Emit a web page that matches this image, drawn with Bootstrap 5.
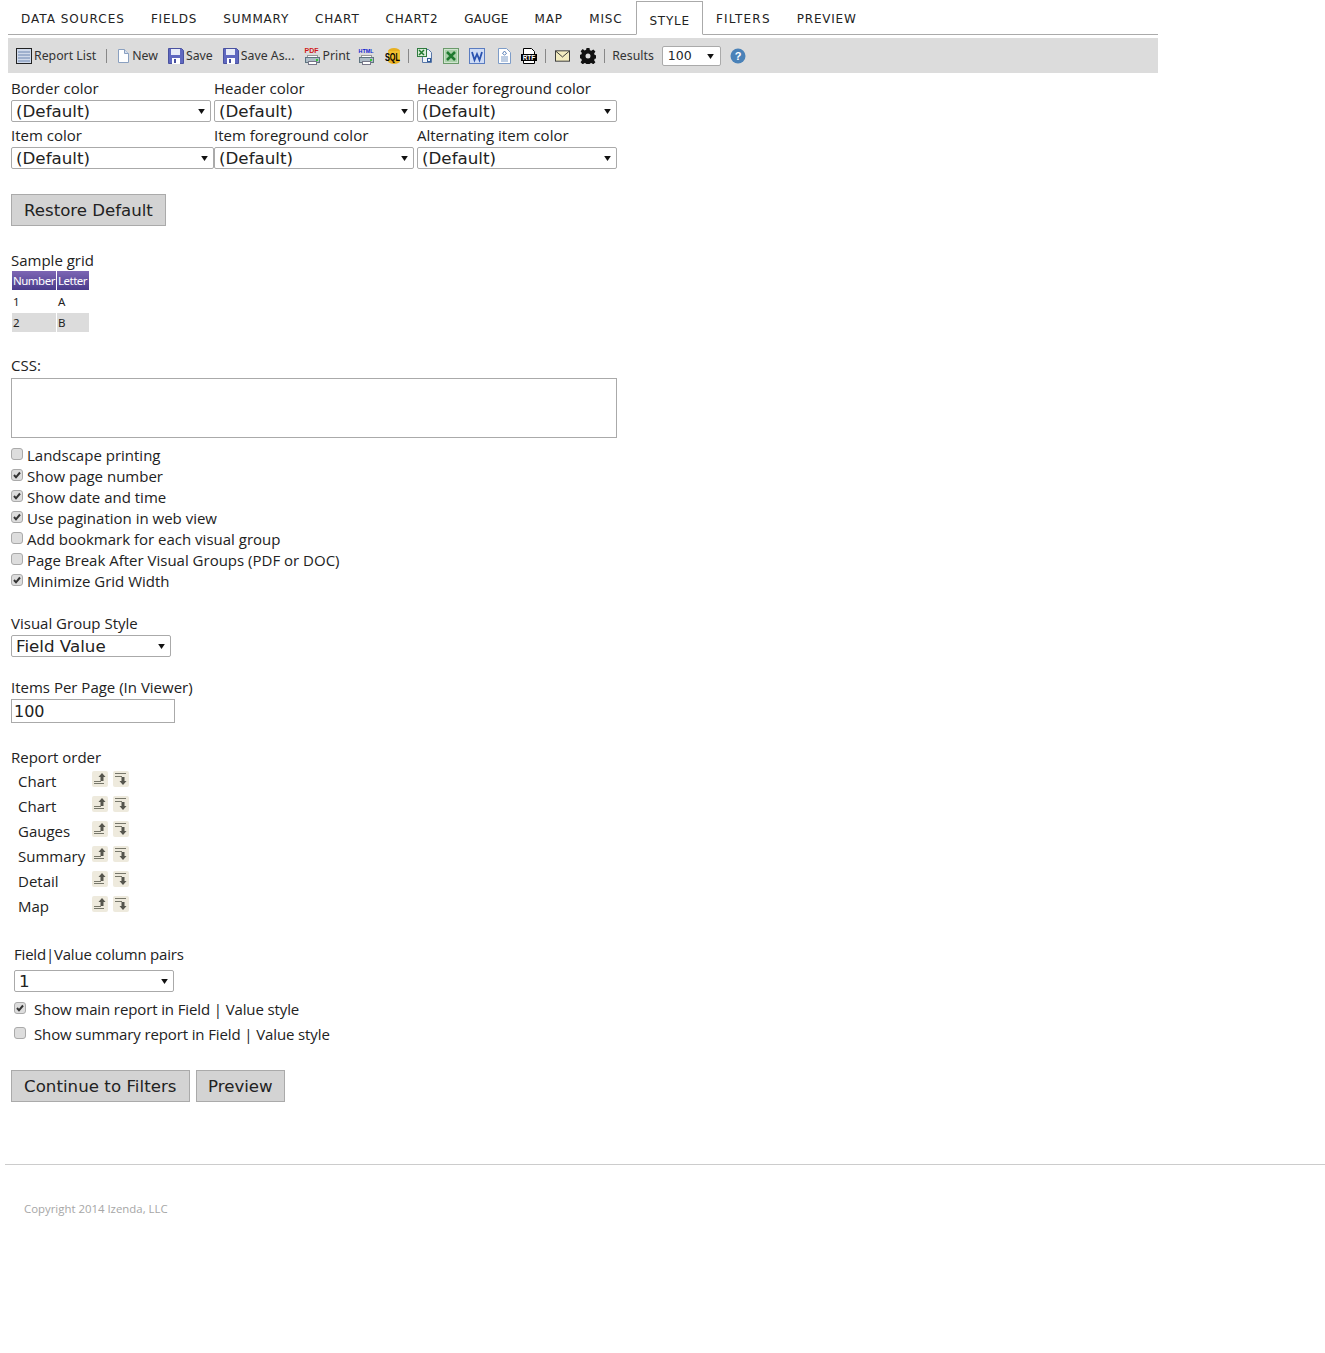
<!DOCTYPE html>
<html lang="en">
<head>
  <meta charset="UTF-8" />
  <meta name="viewport" content="width=device-width, initial-scale=1" />
  <title>Report Designer - Style</title>
  <link href="https://cdn.jsdelivr.net/npm/bootstrap@5.3.3/dist/css/bootstrap.min.css" rel="stylesheet" />
  <style>
    body {
      font-family: "Open Sans", "Noto Sans", sans-serif;
      font-size: 15px;
      color: #222;
      background: #fff;
      height: 1353px;
      overflow: hidden;
    }
    .top-area { width: 1150px; margin-left: 8px; }
    .tab-strip {
      height: 35px;
      border-bottom: 1px solid #aaa;
      flex-wrap: nowrap;
      padding-left: 0;
    }
    .tab-strip .nav-link {
      font-family: "DejaVu Sans", sans-serif;
      font-size: 12px;
      letter-spacing: .8px;
      color: #222;
      padding: 10px 13px 0;
      height: 34px;
      border: 0;
      margin: 0;
    }
    .tab-strip .nav-link.active {
      height: 34px;
      margin-top: 1px;
      padding: 10px 12px 0;
      border: 1px solid #aaa;
      border-bottom: 1px solid #fff;
      border-radius: 0;
    }
    /* word widths differ a bit from the original font */
    .tab-strip li:nth-child(1) .nav-link { letter-spacing: 1px; }
    .tab-strip li:nth-child(6) .nav-link { letter-spacing: .2px; }
    .tab-strip li:nth-child(7) .nav-link { padding-right: 13.6px; }
    .tab-strip li:nth-child(8) .nav-link { padding-right: 14px; }
    .tab-strip li:nth-child(10) .nav-link { letter-spacing: 1.2px; }
    .tool-bar {
      margin-top: 3px;
      height: 35px;
      background: #dcdcdc;
      padding: 1px 0 0 8px;
      font-family: "Noto Sans", sans-serif;
      font-size: 12.3px;
      color: #333;
    }
    .tool-item { margin-right: 10px; white-space: nowrap; }
    .tool-item svg { display: block; overflow: visible; }
    .icon-gap svg { margin-right: 2px; }
    .print-item { margin-right: 8px; }
    .word-item { margin-right: 13px; }
    .tool-sep { width: 1px; height: 14px; background: #888; }
    .sep-a { margin: 0 10px 0 0; }
    .sep-b { margin: 0 8px 0 -3px; }
    .sep-c { margin: 0 9px 0 -2px; }
    .sep-d { margin: 0 7px 0 -2px; }
    .results-sel {
      width: 59px;
      height: 20px;
      margin: 0 9px 0 8px;
      padding: 0 0 0 5px;
      font-family: "DejaVu Sans", sans-serif;
      font-size: 12.5px;
      border: 1px solid #aaa;
      border-radius: 2px;
      background-size: 7px 5px;
      background-position: right 6px center;
      background-image: url("data:image/svg+xml,%3csvg xmlns='http://www.w3.org/2000/svg' viewBox='0 0 8 6'%3e%3cpath fill='%23111' d='M0 0h8L4 6z'/%3e%3c/svg%3e");
    }
    .form-area { padding-left: 11px; width: 617px; }
    .lbl { line-height: 20px; height: 20px; }
    .first-row { padding-top: 6px; }
    .sel-cell { width: 200px; margin-right: 3px; }
    .sel-cell.wide { width: 203px; margin-right: 0; }
    .sel-cell .lbl { line-height: 18px; }
    .sel-cell .plain-sel { margin-top: 1px; }
    .plain-sel {
      height: 22px;
      padding: 0 0 0 4px;
      font-family: "DejaVu Sans", sans-serif;
      font-size: 16.7px;
      line-height: 20px;
      color: #222;
      border: 1px solid #aaa;
      border-radius: 2px;
      background-position: right 5px center;
      background-size: 7px 5px;
      background-image: url("data:image/svg+xml,%3csvg xmlns='http://www.w3.org/2000/svg' viewBox='0 0 8 6'%3e%3cpath fill='%23111' d='M0 0h8L4 6z'/%3e%3c/svg%3e");
    }
    .grey-btn {
      font-family: "DejaVu Sans", sans-serif;
      font-size: 16.6px;
      line-height: 21px;
      height: 32px;
      padding: 5px 12px 4px;
      color: #222;
      background: #d3d3d3;
      border: 1px solid #aaa;
      border-radius: 0;
    }
    .grey-btn.long-btn { letter-spacing: .05px; }
    .grey-btn.short-btn { padding-left: 11.5px; padding-right: 11.5px; }
    .sample-grid {
      table-layout: fixed;
      width: 79px;
      margin-top: -1px;
      border-collapse: separate;
      border-spacing: 1px 2px;
      font-family: "Noto Sans", sans-serif;
      font-size: 11.5px;
    }
    .sample-grid th {
      height: 19px;
      padding: 0 1px;
      font-weight: 400;
      color: #fff;
      letter-spacing: -.5px;
      white-space: nowrap;
      background: linear-gradient(#7d66b4, #4a3c8c);
    }
    .sample-grid td { height: 19px; padding: 0 1px; }
    .sample-grid tr.alt td { background: #dcdcdc; }
    .css-box {
      display: block;
      width: 606px;
      height: 60px;
      border: 1px solid #aaa;
      border-radius: 0;
      padding: 2px;
      resize: none;
    }
    .chk-line { height: 21px; line-height: 21px; display: flex; align-items: center; white-space: nowrap; }
    .chk-line .form-check-input {
      width: 12px;
      height: 12px;
      margin: -4px 4px 0 0;
      background-color: #ddd;
      border: 1px solid #aaa;
      border-radius: 3px;
      flex: none;
    }
    .chk-line .form-check-input:checked {
      background-size: 10px 10px;
      background-image: url("data:image/svg+xml,%3csvg xmlns='http://www.w3.org/2000/svg' viewBox='0 0 10 10'%3e%3cpath fill='none' stroke='%23333' stroke-width='2' d='M2 5l2 2.300L8 2.500'/%3e%3c/svg%3e");
    }
    .wide-gap .form-check-input { margin-right: 8px; }
    .wide-gap.chk-line { height: 25px; }
    .pipe-text { letter-spacing: -.12px; }
    .pipe-text .lbl { letter-spacing: -.2px; line-height: 22px; }
    .num-box {
      display: block;
      width: 164px;
      height: 24px;
      padding: 1px 2px 0;
      font-family: "DejaVu Sans", sans-serif;
      font-size: 16px;
      color: #222;
      border: 1px solid #aaa;
      border-radius: 0;
    }
    .order-row { height: 25px; padding-left: 7px; }
    .order-name { width: 74px; line-height: 25px; }
    .order-btn { display: block; margin: 2px 5px 0 0; }
    .foot-line { margin: 62px 0 0 5px; border: 0; border-top: 1px solid #ccc; opacity: 1; }
    .copy-note { padding: 35px 0 0 24px; font-size: 11.4px; color: #a6a6a6; }
  </style>
</head>
<body>

<svg width="0" height="0" class="position-absolute">
  <defs>
    <symbol id="ic-list" viewBox="0 0 16 16">
      <rect x=".5" y=".5" width="15" height="15" fill="#cfd9ea" stroke="#222"/>
      <path d="M2 4h12M2 7h12M2 10h12M2 13h12" stroke="#6d86b0"/>
    </symbol>
    <symbol id="ic-page" viewBox="0 0 13 16">
      <path d="M1.500 1.500h6l4 4v9h-10z" fill="#fff" stroke="#8aa0c0"/>
      <path d="M7.500 1.500v4h4" fill="#d5dfee" stroke="#8aa0c0"/>
    </symbol>
    <symbol id="ic-disk" viewBox="0 0 16 16">
      <path d="M.5.500h13l2 2v13H.500z" fill="#5f68c0" stroke="#4a52a0"/>
      <rect x="3" y="1" width="9" height="6" fill="#e8ecf8"/>
      <rect x="4" y="10" width="8" height="6" fill="#fff"/>
      <rect x="6" y="11" width="2" height="4" fill="#4a52a0"/>
    </symbol>
    <symbol id="ic-printer" viewBox="0 0 16 16">
      <rect x="3.500" y="6.500" width="10" height="3" fill="#fff" stroke="#999"/>
      <rect x="1.500" y="8.500" width="14" height="5" fill="#aebcc6" stroke="#5f7480"/>
      <rect x="4.500" y="12.500" width="8" height="3" fill="#fff" stroke="#778"/>
      <rect x="12" y="10" width="2" height="2" fill="#3c3"/>
    </symbol>
    <symbol id="ic-excel" viewBox="0 0 16 16">
      <rect x=".5" y=".5" width="15" height="15" fill="#cfe5cf" stroke="#6a9a6a"/>
      <rect x="2" y="2" width="12" height="12" fill="#a9cfa9"/>
      <path d="M4 4l8 8M12 4l-8 8" stroke="#1f7a2f" stroke-width="2.500"/>
    </symbol>
    <symbol id="ic-sheet" viewBox="0 0 16 16">
      <path d="M5.500 1.500h6l3 3v10h-9z" fill="#eef3fa" stroke="#5a78a8"/>
      <rect x=".5" y=".5" width="9" height="8" fill="#d6ecd6" stroke="#2f7a3f"/>
      <path d="M2 2l5 5M7 2L2 7" stroke="#1f7a2f" stroke-width="1.500"/>
      <rect x="10.500" y="10.500" width="3" height="3" fill="none" stroke="#2f5a98"/>
    </symbol>
    <symbol id="ic-word" viewBox="0 0 16 16">
      <rect x=".5" y=".5" width="15" height="15" fill="#cfdcf5" stroke="#5a7cc0"/>
      <path d="M3 4l2.500 8L8 6l2.500 6L13 4" fill="none" stroke="#2a52b0" stroke-width="1.800"/>
    </symbol>
    <symbol id="ic-doc" viewBox="0 0 13 16">
      <path d="M.5.500h8l4 4v11H.500z" fill="#fff" stroke="#7d9cc8"/>
      <path d="M3 9h7M3 11h7M3 13h7" stroke="#7d9cc8"/>
      <path d="M6.500 3l2 2.500-2 1.500-2-1.500z" fill="none" stroke="#5a80b8"/>
    </symbol>
    <symbol id="ic-rtf" viewBox="0 0 16 16">
      <path d="M2.500.500h8l3 3V7h-11z" fill="#fff" stroke="#000"/>
      <rect y="6" width="16" height="7" fill="#000"/>
      <path d="M2.500 13v2.500h11V13" fill="#fff" stroke="#000"/>
      <text x="8" y="12" text-anchor="middle" font-size="6.500" font-weight="700" font-family="Liberation Sans" fill="#fff">RTF</text>
    </symbol>
    <symbol id="ic-sql" viewBox="0 0 17 16">
      <ellipse cx="10" cy="3" rx="6" ry="3" fill="#e8b020"/>
      <rect x="4" y="3" width="12" height="10" fill="#f0c030"/>
      <ellipse cx="10" cy="13" rx="6" ry="3" fill="#e8b020"/>
      <text x="8.500" y="13" text-anchor="middle" font-size="10.500" font-weight="700" font-family="Liberation Sans" textLength="15" lengthAdjust="spacingAndGlyphs" fill="#000">SQL</text>
    </symbol>
    <symbol id="ic-mail" viewBox="0 0 16 16">
      <rect x=".5" y="2.500" width="15" height="11" fill="#f3ecc0" stroke="#333"/>
      <path d="M1 3l7 6 7-6" fill="none" stroke="#333"/>
    </symbol>
    <symbol id="ic-gear" viewBox="0 0 16 16">
      <path fill="#111" fill-rule="evenodd" d="M6.500 0h3l.4 2.200 1.500.6 1.900-1.300 2.100 2.100-1.300 1.900.6 1.500 2.200.4v3l-2.200.4-.6 1.500 1.300 1.900-2.100 2.100-1.900-1.300-1.500.6-.4 2.200h-3l-.4-2.200-1.500-.6-1.900 1.300-2.100-2.100 1.300-1.900-.6-1.500L-.9 10v-3l2.200-.4.6-1.500-1.300-1.900 2.100-2.100 1.900 1.300 1.500-.6zM8 5.500a2.500 2.500 0 1 0 0 5 2.500 2.500 0 0 0 0-5z"/>
    </symbol>
    <symbol id="ic-up" viewBox="0 0 16 16">
      <rect width="16" height="16" rx="2" fill="#eeeadd"/>
      <path d="M2 10.500h7M2 12.500h10" stroke="#77776a"/>
      <path d="M10 2l3.500 4h-2v4h-3V6h-2z" fill="#55554d"/>
    </symbol>
    <symbol id="ic-down" viewBox="0 0 16 16">
      <rect width="16" height="16" rx="2" fill="#eeeadd"/>
      <path d="M2 2.500h11M2 5.500h7" stroke="#77776a"/>
      <path d="M10 14l-3.500-4h2V6h3v4h2z" fill="#55554d"/>
    </symbol>
  </defs>
</svg>

<div class="top-area">
  <ul class="nav tab-strip">
    <li class="nav-item"><a class="nav-link" href="#">DATA SOURCES</a></li>
    <li class="nav-item"><a class="nav-link" href="#">FIELDS</a></li>
    <li class="nav-item"><a class="nav-link" href="#">SUMMARY</a></li>
    <li class="nav-item"><a class="nav-link" href="#">CHART</a></li>
    <li class="nav-item"><a class="nav-link" href="#">CHART2</a></li>
    <li class="nav-item"><a class="nav-link" href="#">GAUGE</a></li>
    <li class="nav-item"><a class="nav-link" href="#">MAP</a></li>
    <li class="nav-item"><a class="nav-link" href="#">MISC</a></li>
    <li class="nav-item"><a class="nav-link active" href="#">STYLE</a></li>
    <li class="nav-item"><a class="nav-link" href="#">FILTERS</a></li>
    <li class="nav-item"><a class="nav-link" href="#">PREVIEW</a></li>
  </ul>

  <div class="tool-bar d-flex align-items-center">
    <span class="tool-item icon-gap d-flex align-items-center"><svg width="16" height="16"><use href="#ic-list"/></svg>Report List</span>
    <span class="tool-sep sep-a"></span>
    <span class="tool-item icon-gap d-flex align-items-center"><svg width="13" height="16"><use href="#ic-page"/></svg>New</span>
    <span class="tool-item icon-gap d-flex align-items-center"><svg width="16" height="16"><use href="#ic-disk"/></svg>Save</span>
    <span class="tool-item icon-gap d-flex align-items-center"><svg width="16" height="16"><use href="#ic-disk"/></svg>Save As...</span>
    <span class="tool-item print-item icon-gap d-flex align-items-center">
      <svg width="16" height="18" viewBox="0 0 16 18"><text x="7.500" y="6" text-anchor="middle" font-size="7" font-weight="700" font-family="Liberation Sans" textLength="14" lengthAdjust="spacingAndGlyphs" fill="#d01818">PDF</text><use href="#ic-printer" y="2" width="16" height="16"/></svg>Print
    </span>
    <span class="tool-item">
      <svg width="16" height="18" viewBox="0 0 16 18"><text x="8" y="6" text-anchor="middle" font-size="6" font-weight="700" font-family="Liberation Sans" textLength="15" lengthAdjust="spacingAndGlyphs" fill="#1020d0">HTML</text><use href="#ic-printer" y="2" width="16" height="16"/></svg>
    </span>
    <span class="tool-item"><svg width="17" height="16"><use href="#ic-sql"/></svg></span>
    <span class="tool-sep sep-b"></span>
    <span class="tool-item"><svg width="16" height="16"><use href="#ic-sheet"/></svg></span>
    <span class="tool-item"><svg width="16" height="16"><use href="#ic-excel"/></svg></span>
    <span class="tool-item word-item"><svg width="16" height="16"><use href="#ic-word"/></svg></span>
    <span class="tool-item"><svg width="13" height="16"><use href="#ic-doc"/></svg></span>
    <span class="tool-item"><svg width="16" height="16"><use href="#ic-rtf"/></svg></span>
    <span class="tool-sep sep-c"></span>
    <span class="tool-item"><svg width="15" height="16"><use href="#ic-mail"/></svg></span>
    <span class="tool-item"><svg width="16" height="16"><use href="#ic-gear"/></svg></span>
    <span class="tool-sep sep-d"></span>
    <span>Results</span>
    <select class="form-select results-sel"><option>100</option></select>
    <svg width="16" height="16" viewBox="0 0 16 16"><circle cx="8" cy="8" r="7.500" fill="#4a82b8"/><text x="8" y="12" text-anchor="middle" font-size="11" font-weight="700" font-family="Liberation Sans" fill="#fff">?</text></svg>
  </div>
</div>

<div class="form-area">
  <div class="d-flex first-row">
    <div class="sel-cell"><div class="lbl">Border color</div><select class="form-select plain-sel"><option>(Default)</option></select></div>
    <div class="sel-cell"><div class="lbl">Header color</div><select class="form-select plain-sel"><option>(Default)</option></select></div>
    <div class="sel-cell me-0"><div class="lbl">Header foreground color</div><select class="form-select plain-sel"><option>(Default)</option></select></div>
  </div>
  <div class="d-flex pt-1">
    <div class="sel-cell wide"><div class="lbl">Item color</div><select class="form-select plain-sel"><option>(Default)</option></select></div>
    <div class="sel-cell"><div class="lbl">Item foreground color</div><select class="form-select plain-sel"><option>(Default)</option></select></div>
    <div class="sel-cell me-0"><div class="lbl">Alternating item color</div><select class="form-select plain-sel"><option>(Default)</option></select></div>
  </div>

  <button type="button" class="btn grey-btn" style="margin-top:25px">Restore Default</button>

  <div class="lbl" style="margin-top:24px">Sample grid</div>
  <table class="sample-grid">
    <thead><tr><th style="width:44px">Number</th><th style="width:32px">Letter</th></tr></thead>
    <tbody>
      <tr><td>1</td><td>A</td></tr>
      <tr class="alt"><td>2</td><td>B</td></tr>
    </tbody>
  </table>

  <div class="lbl" style="margin-top:21px">CSS:</div>
  <textarea class="form-control css-box" style="margin-top:3px"></textarea>

  <div style="margin-top:7px">
    <label class="chk-line"><input class="form-check-input" type="checkbox" />Landscape printing</label>
    <label class="chk-line"><input class="form-check-input" type="checkbox" checked />Show page number</label>
    <label class="chk-line"><input class="form-check-input" type="checkbox" checked />Show date and time</label>
    <label class="chk-line"><input class="form-check-input" type="checkbox" checked />Use pagination in web view</label>
    <label class="chk-line"><input class="form-check-input" type="checkbox" />Add bookmark for each visual group</label>
    <label class="chk-line"><input class="form-check-input" type="checkbox" />Page Break After Visual Groups (PDF or DOC)</label>
    <label class="chk-line"><input class="form-check-input" type="checkbox" checked />Minimize Grid Width</label>
  </div>

  <div class="lbl" style="margin-top:21px">Visual Group Style</div>
  <select class="form-select plain-sel" style="width:160px;margin-top:2px"><option>Field Value</option></select>

  <div class="lbl" style="margin-top:20px">Items Per Page (In Viewer)</div>
  <input class="form-control num-box" style="margin-top:2px" type="text" value="100" />

  <div class="lbl" style="margin-top:24px">Report order</div>
  <div style="margin-top:2px">
    <div class="order-row d-flex"><span class="order-name">Chart</span><svg class="order-btn" width="16" height="16"><use href="#ic-up"/></svg><svg class="order-btn" width="16" height="16"><use href="#ic-down"/></svg></div>
    <div class="order-row d-flex"><span class="order-name">Chart</span><svg class="order-btn" width="16" height="16"><use href="#ic-up"/></svg><svg class="order-btn" width="16" height="16"><use href="#ic-down"/></svg></div>
    <div class="order-row d-flex"><span class="order-name">Gauges</span><svg class="order-btn" width="16" height="16"><use href="#ic-up"/></svg><svg class="order-btn" width="16" height="16"><use href="#ic-down"/></svg></div>
    <div class="order-row d-flex"><span class="order-name">Summary</span><svg class="order-btn" width="16" height="16"><use href="#ic-up"/></svg><svg class="order-btn" width="16" height="16"><use href="#ic-down"/></svg></div>
    <div class="order-row d-flex"><span class="order-name">Detail</span><svg class="order-btn" width="16" height="16"><use href="#ic-up"/></svg><svg class="order-btn" width="16" height="16"><use href="#ic-down"/></svg></div>
    <div class="order-row d-flex"><span class="order-name">Map</span><svg class="order-btn" width="16" height="16"><use href="#ic-up"/></svg><svg class="order-btn" width="16" height="16"><use href="#ic-down"/></svg></div>
  </div>

  <div class="pipe-text" style="padding-left:3px;margin-top:24px">
    <div class="lbl">Field|Value column pairs</div>
    <select class="form-select plain-sel" style="width:160px;margin-top:7px"><option>1</option></select>
    <div style="margin-top:5px">
      <label class="chk-line wide-gap"><input class="form-check-input" type="checkbox" checked />Show main report in Field | Value style</label>
      <label class="chk-line wide-gap"><input class="form-check-input" type="checkbox" />Show summary report in Field | Value style</label>
    </div>
  </div>

  <div class="d-flex" style="gap:6px;margin-top:23px">
    <button type="button" class="btn grey-btn long-btn">Continue to Filters</button>
    <button type="button" class="btn grey-btn short-btn">Preview</button>
  </div>
</div>

<hr class="foot-line" />
<div class="copy-note">Copyright 2014 Izenda, LLC</div>

<script src="https://cdn.jsdelivr.net/npm/bootstrap@5.3.3/dist/js/bootstrap.bundle.min.js"></script>
</body>
</html>
